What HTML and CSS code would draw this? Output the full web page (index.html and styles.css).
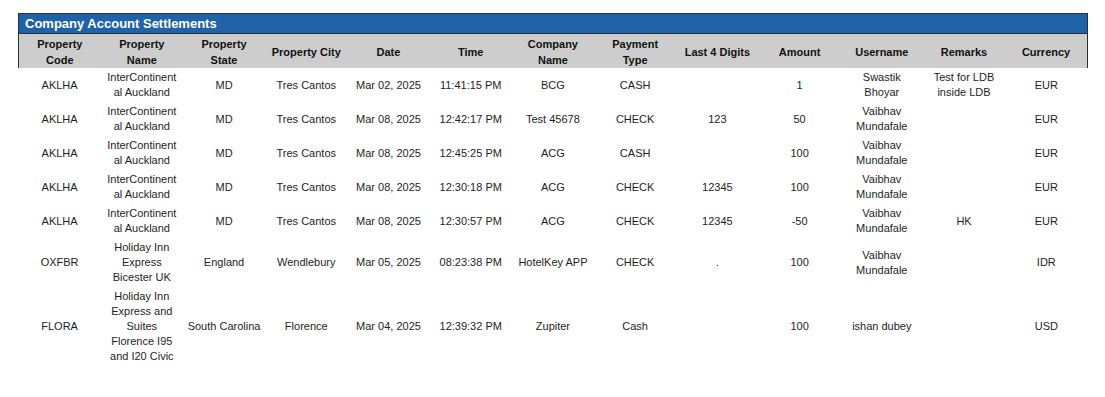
FILE: index.html
```html
<!DOCTYPE html>
<html lang="en">
<head>
  <meta charset="UTF-8" />
  <title>Company Account Settlements</title>
  <link rel="stylesheet" href="styles.css">
</head>
<body>
  <div class="report">
    <div class="report-title">Company Account Settlements</div>
    <table class="settlements">
      <thead>
        <tr>
          <th>Property Code</th>
          <th>Property Name</th>
          <th>Property State</th>
          <th>Property City</th>
          <th>Date</th>
          <th>Time</th>
          <th>Company Name</th>
          <th>Payment Type</th>
          <th>Last 4 Digits</th>
          <th>Amount</th>
          <th>Username</th>
          <th>Remarks</th>
          <th>Currency</th>
        </tr>
      </thead>
      <tbody>
        <tr>
          <td>AKLHA</td>
          <td>InterContinental Auckland</td>
          <td>MD</td>
          <td>Tres Cantos</td>
          <td>Mar 02, 2025</td>
          <td>11:41:15 PM</td>
          <td>BCG</td>
          <td>CASH</td>
          <td></td>
          <td>1</td>
          <td>Swastik Bhoyar</td>
          <td>Test for LDB inside LDB</td>
          <td>EUR</td>
        </tr>
        <tr>
          <td>AKLHA</td>
          <td>InterContinental Auckland</td>
          <td>MD</td>
          <td>Tres Cantos</td>
          <td>Mar 08, 2025</td>
          <td>12:42:17 PM</td>
          <td>Test 45678</td>
          <td>CHECK</td>
          <td>123</td>
          <td>50</td>
          <td>Vaibhav Mundafale</td>
          <td></td>
          <td>EUR</td>
        </tr>
        <tr>
          <td>AKLHA</td>
          <td>InterContinental Auckland</td>
          <td>MD</td>
          <td>Tres Cantos</td>
          <td>Mar 08, 2025</td>
          <td>12:45:25 PM</td>
          <td>ACG</td>
          <td>CASH</td>
          <td></td>
          <td>100</td>
          <td>Vaibhav Mundafale</td>
          <td></td>
          <td>EUR</td>
        </tr>
        <tr>
          <td>AKLHA</td>
          <td>InterContinental Auckland</td>
          <td>MD</td>
          <td>Tres Cantos</td>
          <td>Mar 08, 2025</td>
          <td>12:30:18 PM</td>
          <td>ACG</td>
          <td>CHECK</td>
          <td>12345</td>
          <td>100</td>
          <td>Vaibhav Mundafale</td>
          <td></td>
          <td>EUR</td>
        </tr>
        <tr>
          <td>AKLHA</td>
          <td>InterContinental Auckland</td>
          <td>MD</td>
          <td>Tres Cantos</td>
          <td>Mar 08, 2025</td>
          <td>12:30:57 PM</td>
          <td>ACG</td>
          <td>CHECK</td>
          <td>12345</td>
          <td>-50</td>
          <td>Vaibhav Mundafale</td>
          <td>HK</td>
          <td>EUR</td>
        </tr>
        <tr>
          <td>OXFBR</td>
          <td>Holiday Inn Express Bicester UK</td>
          <td>England</td>
          <td>Wendlebury</td>
          <td>Mar 05, 2025</td>
          <td>08:23:38 PM</td>
          <td>HotelKey APP</td>
          <td>CHECK</td>
          <td>.</td>
          <td>100</td>
          <td>Vaibhav Mundafale</td>
          <td></td>
          <td>IDR</td>
        </tr>
        <tr>
          <td>FLORA</td>
          <td>Holiday Inn Express and Suites Florence I95 and I20 Civic</td>
          <td>South Carolina</td>
          <td>Florence</td>
          <td>Mar 04, 2025</td>
          <td>12:39:32 PM</td>
          <td>Zupiter</td>
          <td>Cash</td>
          <td></td>
          <td>100</td>
          <td>ishan dubey</td>
          <td></td>
          <td>USD</td>
        </tr>
      </tbody>
    </table>
  </div>
</body>
</html>
```

FILE: styles.css
```css
:root {
  --titulo: #2062a9;
  --cabecera: #cdcdcd;
  --borde: #2a2f36;
  --texto: #1e1e1e;
}
body {
  font-family: 'Liberation Sans', Arial, sans-serif;
  margin: 0;
  padding: 13px 0 0 18px;
  background: #ffffff;
  color: var(--texto);
}
.report {
  width: 1070px;
}
.report-title {
  background: var(--titulo);
  color: #ffffff;
  font-size: 13px;
  font-weight: bold;
  line-height: 19px;
  padding: 0 6px;
  border: 1px solid var(--borde);
  border-bottom: none;
}
.settlements {
  width: 100%;
  table-layout: fixed;
  border-collapse: collapse;
  font-size: 11px;
}
.settlements thead tr {
  border-top: 1px solid var(--borde);
}
.settlements th {
  background: var(--cabecera);
  color: #111111;
  font-weight: bold;
  line-height: 16px;
  height: 33px;
  padding: 1px 5px 0;
  text-align: center;
  vertical-align: middle;
}
.settlements th:first-child {
  border-left: 1px solid var(--borde);
}
.settlements th:last-child {
  border-right: 1px solid var(--borde);
}
.settlements td {
  line-height: 15px;
  padding: 2px 4px;
  text-align: center;
  vertical-align: middle;
  overflow-wrap: break-word;
  word-break: break-word;
}
```
